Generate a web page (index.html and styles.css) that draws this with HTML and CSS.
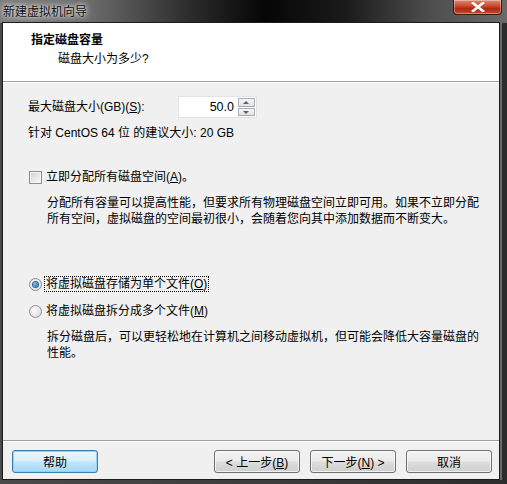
FILE: index.html
```html
<!DOCTYPE html>
<html lang="zh-CN">
<head>
    <meta charset="UTF-8">
    <title>新建虚拟机向导</title>
    <link rel="stylesheet" href="styles.css">
</head>
<body>
    <div class="window">
        <div class="titlebar">
            <span class="title">新建虚拟机向导</span>
            <div class="close-btn">
                <svg width="14" height="10" viewBox="0 0 14 10">
                    <path d="M2 1 L12 9 M12 1 L2 9" stroke="#fff" stroke-width="2.6" stroke-linecap="square"/>
                </svg>
            </div>
        </div>
        <div class="client">
            <div class="header">
                <div class="header-title">指定磁盘容量</div>
                <div class="header-sub">磁盘大小为多少?</div>
            </div>
            <div class="content">
                <div class="size-row">
                    <span class="size-label">最大磁盘大小(GB)(<u>S</u>):</span>
                    <div class="spin">
                        <span class="spin-value">50.0</span>
                        <div class="spin-btns">
                            <span class="spin-btn up"></span>
                            <span class="spin-btn down"></span>
                        </div>
                    </div>
                </div>
                <div class="hint">针对 CentOS 64 位 的建议大小: 20 GB</div>

                <div class="option check-row">
                    <span class="checkbox"></span>
                    <span class="option-label">立即分配所有磁盘空间(<u>A</u>)。</span>
                </div>
                <p class="desc">分配所有容量可以提高性能，但要求所有物理磁盘空间立即可用。如果不立即分配所有空间，虚拟磁盘的空间最初很小，会随着您向其中添加数据而不断变大。</p>

                <div class="option radio-row first-radio">
                    <span class="radio checked"></span>
                    <span class="option-label focused">将虚拟磁盘存储为单个文件(<u>O</u>)</span>
                </div>
                <div class="option radio-row">
                    <span class="radio"></span>
                    <span class="option-label">将虚拟磁盘拆分成多个文件(<u>M</u>)</span>
                </div>
                <p class="desc">拆分磁盘后，可以更轻松地在计算机之间移动虚拟机，但可能会降低大容量磁盘的性能。</p>
            </div>
            <div class="footer">
                <button class="btn btn-default">帮助</button>
                <button class="btn btn-back">&lt; 上一步(<u>B</u>)</button>
                <button class="btn">下一步(<u>N</u>) &gt;</button>
                <button class="btn">取消</button>
            </div>
        </div>
    </div>
</body>
</html>
```

FILE: styles.css
```css
body {
    margin: 0;
    width: 507px;
    height: 484px;
    overflow: hidden;
    font-family: "Liberation Sans", "Noto Sans CJK SC", sans-serif;
    font-size: 12px;
    color: #000;
}
.window {
    width: 507px;
    height: 484px;
    display: flex;
    flex-direction: column;
    background: linear-gradient(to right, #4a4a4a 0%, #3a3a3a 60%, #2c2c2c 100%);
    box-sizing: border-box;
}
.titlebar {
    height: 23px;
    display: flex;
    justify-content: space-between;
    align-items: flex-start;
    background: linear-gradient(to right, #7c7c7c 0%, #6a6a6a 18%, #2a2a2a 38%, #060606 52%, #1a1a1a 68%, #4e4e4e 85%, #6a6a6a 100%);
}
.title {
    margin: 3px 0 0 3px;
    font-family: "Noto Sans CJK SC", sans-serif;
    font-size: 12px;
    line-height: 16px;
    color: #111;
    text-shadow: 0 0 6px #d8d8d8, 0 0 10px #cfcfcf, 0 0 3px #e8e8e8;
}
.close-btn {
    width: 47px;
    height: 14px;
    margin-right: 5px;
    border: 1px solid #3b1a14;
    border-top: none;
    border-radius: 0 0 4px 4px;
    background: linear-gradient(#e08a73 0%, #c9472b 45%, #a92a10 60%, #c64a2a 100%);
    box-shadow: inset 0 0 0 1px rgba(255,255,255,0.35);
    display: flex;
    justify-content: center;
    align-items: center;
}
.client {
    width: 496px;
    height: 456px;
    margin-left: 3px;
    background: #f0f0f0;
    display: flex;
    flex-direction: column;
    box-shadow: 0 0 0 1px #1c1c1c, 2px 0 0 1px #6a6a6a;
}
.header {
    height: 58px;
    background: #fff;
    border-bottom: 1px solid #a0a0a0;
    box-shadow: 0 1px 0 #fff;
    box-sizing: content-box;
}
.header-title {
    margin: 8px 0 0 28px;
    font-family: "Noto Sans CJK SC", sans-serif;
    font-weight: bold;
    line-height: 16px;
}
.header-sub {
    margin: 4px 0 0 55px;
    line-height: 16px;
}
.content {
    flex: 1;
    padding: 14px 0 0 25px;
}
.size-row {
    display: flex;
    align-items: center;
    height: 22px;
}
.size-label {
    width: 150px;
    line-height: 16px;
}
.spin {
    width: 79px;
    height: 22px;
    display: flex;
    background: #fff;
    border: 1px solid #e3e3e3;
    box-sizing: border-box;
}
.spin-value {
    flex: 1;
    text-align: right;
    line-height: 20px;
    padding-right: 4px;
    font-size: 12.5px;
}
.spin-btns {
    width: 17px;
    display: flex;
    flex-direction: column;
    gap: 1px;
    padding: 1px 1px 1px 0;
}
.spin-btn {
    flex: 1;
    border: 1px solid #a9abae;
    background: linear-gradient(#f6f6f6, #e2e2e2);
    position: relative;
}
.spin-btn::after {
    content: "";
    position: absolute;
    left: 4px;
    top: 2px;
    border-left: 3px solid transparent;
    border-right: 3px solid transparent;
}
.spin-btn.up::after {
    border-bottom: 3px solid #4d6185;
}
.spin-btn.down::after {
    border-top: 3px solid #4d6185;
}
.hint {
    margin-top: 7px;
    line-height: 16px;
}
.option {
    display: flex;
    align-items: center;
    height: 16px;
    padding-left: 1px;
}
.check-row {
    margin-top: 28px;
}
.checkbox {
    width: 13px;
    height: 13px;
    box-sizing: border-box;
    border: 1px solid #8e8f8f;
    background: linear-gradient(135deg, #d2d2d2, #fafafa);
    box-shadow: inset 0 0 0 1px #f4f4f4;
}
.radio {
    width: 13px;
    height: 13px;
    box-sizing: border-box;
    border-radius: 50%;
    border: 1px solid #8e8f8f;
    background: radial-gradient(circle at 40% 40%, #fbfbfb, #d4d4d4);
    display: flex;
    justify-content: center;
    align-items: center;
}
.radio.checked::after {
    content: "";
    width: 5px;
    height: 5px;
    border-radius: 50%;
    background: radial-gradient(circle at 35% 35%, #7ac0f0, #1e5ea8);
    box-shadow: 0 0 0 1px #2f5f96;
}
.option-label {
    margin-left: 3px;
    line-height: 14px;
    padding: 0 1px;
}
.option-label.focused {
    outline: 1px dotted #000;
}
.desc {
    margin: 10px 0 0 19px;
    line-height: 16px;
    width: 440px;
}
.first-radio {
    margin-top: 49px;
}
.radio-row + .radio-row {
    margin-top: 11px;
}
.footer {
    height: 39px;
    border-top: 1px solid #a0a0a0;
    box-shadow: inset 0 1px 0 #fff;
    display: flex;
    align-items: flex-start;
    gap: 10px;
    padding: 9px 7px 0 9px;
    box-sizing: border-box;
}
.btn {
    width: 86px;
    height: 23px;
    border: 1px solid #707070;
    border-radius: 3px;
    background: linear-gradient(#f2f2f2 0%, #ebebeb 48%, #dddddd 52%, #cfcfcf 100%);
    box-shadow: inset 0 0 0 1px rgba(255,255,255,0.7);
    font-family: "Liberation Sans", "Noto Sans CJK SC", sans-serif;
    font-size: 12px;
    color: #000;
    padding: 0;
}
.btn-default {
    border-color: #3c7fb1;
    background: linear-gradient(#eaf6fd 0%, #d9f0fc 48%, #bee6fd 52%, #a7d9f5 100%);
    box-shadow: inset 0 0 0 1px #98d1ef;
}
.btn-back {
    margin-left: auto;
}
```
